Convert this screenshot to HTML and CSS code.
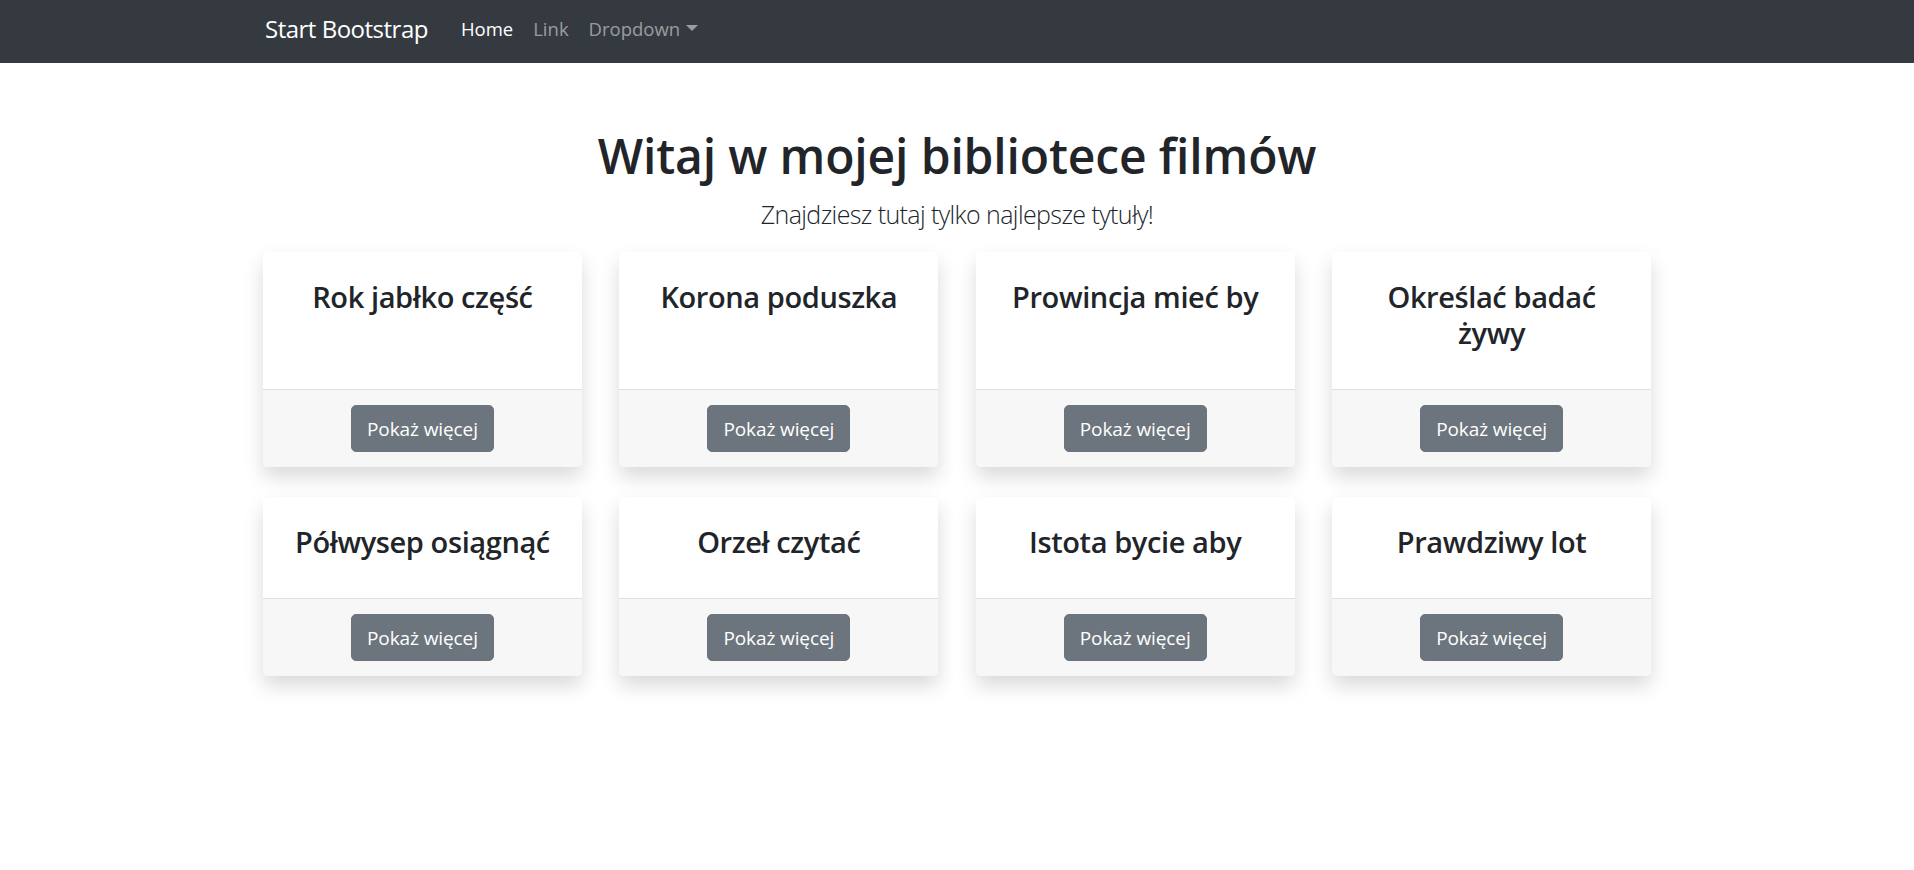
FILE: index.html
```html
<!DOCTYPE html>
<html lang="pl">
<head>
<meta charset="utf-8">
<title>Biblioteka filmów</title>
<link rel="stylesheet" href="styles.css">
</head>
<body>
<nav class="navbar">
  <div class="nav-inner">
    <a class="brand" href="#">Start Bootstrap</a>
    <ul class="nav-links">
      <li><a class="nav-link active" href="#">Home</a></li>
      <li><a class="nav-link" href="#">Link</a></li>
      <li><a class="nav-link dropdown" href="#">Dropdown<span class="caret"></span></a></li>
    </ul>
  </div>
</nav>
<main class="main">
  <h1 class="title">Witaj w mojej bibliotece filmów</h1>
  <p class="lead">Znajdziesz tutaj tylko najlepsze tytuły!</p>
  <div class="grid">
    <div class="card"><div class="card-body"><h4 class="card-title">Rok jabłko część</h4></div><div class="card-footer"><a class="btn" href="#">Pokaż więcej</a></div></div>
    <div class="card"><div class="card-body"><h4 class="card-title">Korona poduszka</h4></div><div class="card-footer"><a class="btn" href="#">Pokaż więcej</a></div></div>
    <div class="card"><div class="card-body"><h4 class="card-title">Prowincja mieć by</h4></div><div class="card-footer"><a class="btn" href="#">Pokaż więcej</a></div></div>
    <div class="card"><div class="card-body"><h4 class="card-title">Określać badać żywy</h4></div><div class="card-footer"><a class="btn" href="#">Pokaż więcej</a></div></div>
    <div class="card"><div class="card-body"><h4 class="card-title">Półwysep osiągnąć</h4></div><div class="card-footer"><a class="btn" href="#">Pokaż więcej</a></div></div>
    <div class="card"><div class="card-body"><h4 class="card-title">Orzeł czytać</h4></div><div class="card-footer"><a class="btn" href="#">Pokaż więcej</a></div></div>
    <div class="card"><div class="card-body"><h4 class="card-title">Istota bycie aby</h4></div><div class="card-footer"><a class="btn" href="#">Pokaż więcej</a></div></div>
    <div class="card"><div class="card-body"><h4 class="card-title">Prawdziwy lot</h4></div><div class="card-footer"><a class="btn" href="#">Pokaż więcej</a></div></div>
  </div>
</main>
</body>
</html>
```

FILE: styles.css
```css
* { box-sizing: border-box; }
body {
  margin: 0;
  font-family: "Open Sans", "Noto Sans", sans-serif;
  color: #212529;
  background: #fff;
}
a { text-decoration: none; }

.navbar {
  height: 63px;
  background: #343a40;
}
.nav-inner {
  width: 1388px;
  margin: 0 auto;
  height: 100%;
  padding: 0 0 5px 2px;
  display: flex;
  align-items: center;
}
.brand {
  color: #fff;
  font-size: 24px;
  letter-spacing: -0.5px;
  line-height: 30px;
  margin-right: 23px;
}
.nav-links {
  list-style: none;
  margin: 0;
  padding: 0;
  display: flex;
}
.nav-link {
  display: flex;
  align-items: center;
  padding: 0 10px;
  font-size: 18.5px;
  line-height: 30px;
  color: rgba(255,255,255,.5);
}
.nav-link.active { color: #fff; }
.caret {
  display: inline-block;
  margin-left: 6px;
  margin-top: -3px;
  width: 0;
  height: 0;
  border-top: 6px solid currentColor;
  border-left: 6px solid transparent;
  border-right: 6px solid transparent;
}

.main {
  width: 1388px;
  margin: 0 auto;
  padding: 63px 0 40px;
  text-align: center;
}
.title {
  margin: 0 0 9.5px;
  font-size: 48px;
  font-weight: 600;
  letter-spacing: -0.15px;
  line-height: 60px;
}
.lead {
  margin: 0 0 19px;
  font-size: 25px;
  font-weight: 300;
  letter-spacing: -0.6px;
  line-height: 37.5px;
}
.grid {
  display: grid;
  grid-template-columns: repeat(4, 1fr);
  column-gap: 37.5px;
  row-gap: 30px;
}
.card {
  display: flex;
  flex-direction: column;
  background: #fff;
  border-radius: 5px;
  box-shadow: 0 10px 20px rgba(0,0,0,.15);
}
.card-body {
  flex: 1;
  padding: 27px 25px 23px;
}
.card-title {
  margin: 0 0 15px;
  font-size: 29px;
  font-weight: 600;
  letter-spacing: -0.4px;
  line-height: 36px;
}
.card-footer {
  padding: 15px 25px;
  background: #f7f7f7;
  border-top: 1px solid #dfdfdf;
  border-radius: 0 0 5px 5px;
}
.btn {
  display: inline-block;
  padding: 7.5px 15px;
  font-size: 19px;
  letter-spacing: -0.1px;
  line-height: 30px;
  color: #fff;
  background: #6c757d;
  border: 1px solid #6c757d;
  border-radius: 5px;
}
```
